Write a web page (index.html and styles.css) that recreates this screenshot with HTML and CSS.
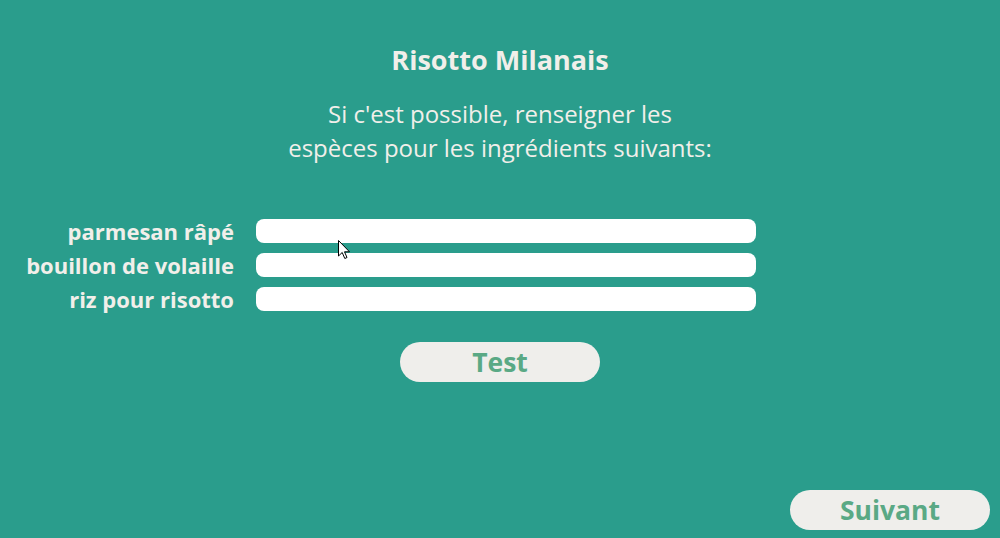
FILE: index.html
```html
<!DOCTYPE html>
<html lang="fr">
<head>
<meta charset="utf-8">
<title>Risotto Milanais</title>
<link rel="stylesheet" href="styles.css">
</head>
<body>
<div class="page">
  <main class="content">
    <h1 class="title">Risotto Milanais</h1>
    <p class="intro">Si c'est possible, renseigner les<br>espèces pour les ingrédients suivants:</p>
    <form class="fields">
      <label class="field-label" for="f1">parmesan râpé</label>
      <input class="field-input" id="f1" type="text">
      <label class="field-label" for="f2">bouillon de volaille</label>
      <input class="field-input" id="f2" type="text">
      <label class="field-label" for="f3">riz pour risotto</label>
      <input class="field-input" id="f3" type="text">
    </form>
    <div class="actions">
      <button class="pill-btn" type="button">Test</button>
    </div>
  </main>
  <footer class="footer">
    <button class="pill-btn" type="button">Suivant</button>
  </footer>
  <svg class="cursor" width="13" height="21" viewBox="0 0 13 21"><path d="M0.5 0.5 L0.5 16 L4.2 12.5 L6.8 18.5 L9 17.5 L6.5 11.8 L11.5 11.8 Z" fill="#ffffff" stroke="#000000" stroke-width="1"/></svg>
</div>
</body>
</html>
```

FILE: styles.css
```css
* { box-sizing: border-box; }
html, body {
  margin: 0;
  padding: 0;
  height: 100%;
}
body {
  background: #2a9d8c;
  font-family: "Open Sans", "Liberation Sans", sans-serif;
  color: #f1efea;
  overflow: hidden;
}
.page {
  position: relative;
  height: 538px;
  display: flex;
  flex-direction: column;
}
.content {
  display: flex;
  flex-direction: column;
  align-items: center;
  padding-top: 42px;
}
.title {
  margin: 0;
  font-size: 27px;
  font-weight: 700;
  line-height: 36px;
}
.intro {
  margin: 19px 0 0;
  font-size: 24px;
  font-weight: 400;
  line-height: 34px;
  text-align: center;
}
.fields {
  align-self: flex-start;
  margin-top: 54px;
  display: grid;
  grid-template-columns: 234px 500px;
  column-gap: 22px;
  row-gap: 10px;
  align-items: center;
}
.field-label {
  text-align: right;
  font-size: 22px;
  font-weight: 700;
  line-height: 24px;
  white-space: nowrap;
}
.field-input {
  height: 24px;
  border: none;
  border-radius: 8px;
  background: #ffffff;
  padding: 0 10px;
  font-family: inherit;
  font-size: 14px;
  outline: none;
}
.actions {
  margin-top: 31px;
  display: flex;
  justify-content: center;
  width: 100%;
}
.pill-btn {
  width: 200px;
  height: 40px;
  border: none;
  border-radius: 20px;
  background: #efeeeb;
  color: #5aa985;
  font-family: "Open Sans", "Liberation Sans", sans-serif;
  font-size: 26.5px;
  font-weight: 700;
  line-height: 40px;
  padding: 0;
}
.footer {
  margin-top: auto;
  display: flex;
  justify-content: flex-end;
  padding: 0 10px 8px 0;
}
.cursor {
  position: absolute;
  left: 338px;
  top: 240px;
}
```
